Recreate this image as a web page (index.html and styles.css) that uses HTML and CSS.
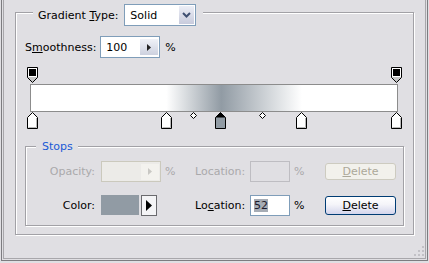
FILE: index.html
```html
<!DOCTYPE html>
<html lang="en">
<head>
    <meta charset="UTF-8">
    <title>Gradient Editor</title>
    <link rel="stylesheet" href="styles.css">
</head>
<body>
<div class="frame">
    <div class="frame-inner">
        <div class="group main">
            <div class="legend">
                <span>Gradient <u>T</u>ype:</span>
                <div class="select">
                    <span class="select-value">Solid</span>
                    <span class="select-btn">
                        <svg width="9" height="6" viewBox="0 0 9 6"><path d="M1 1L4.5 4.5L8 1" fill="none" stroke="#3f4f72" stroke-width="2"/></svg>
                    </span>
                </div>
            </div>

            <div class="row">
                <span>S<u>m</u>oothness:</span>
                <div class="spin">
                    <span class="spin-value">100</span>
                    <span class="spin-btn">
                        <svg width="4" height="7" viewBox="0 0 4 7"><path d="M0 0L4 3.5L0 7Z" fill="#222"/></svg>
                    </span>
                </div>
                <span class="pct">%</span>
            </div>

            <div class="ramp">
                <!-- color stops above the bar (opacity) -->
                <svg class="mark" style="left:2px;top:0" width="11" height="16" viewBox="0 0 11 16">
                    <path d="M0.5 0.5H10.5V10.5L5.5 15.5L0.5 10.5Z" fill="#c4c4c4" stroke="#000"/>
                    <rect x="1" y="1" width="9" height="9" fill="#fff"/>
                    <rect x="2" y="2" width="7" height="7" fill="#000"/>
                </svg>
                <svg class="mark" style="left:366px;top:0" width="11" height="16" viewBox="0 0 11 16">
                    <path d="M0.5 0.5H10.5V10.5L5.5 15.5L0.5 10.5Z" fill="#c4c4c4" stroke="#000"/>
                    <rect x="1" y="1" width="9" height="9" fill="#fff"/>
                    <rect x="2" y="2" width="7" height="7" fill="#000"/>
                </svg>

                <div class="bar"></div>

                <!-- color stops below the bar -->
                <svg class="mark" style="left:2px;top:45px" width="11" height="17" viewBox="0 0 11 17">
                    <path d="M5.5 0.5L10.5 5.5V16.5H0.5V5.5Z" fill="#fff" stroke="#000"/>
                    <path d="M1.5 15.5H9.5V6" fill="none" stroke="#b8b8b8"/>
                </svg>
                <svg class="mark" style="left:136px;top:45px" width="11" height="17" viewBox="0 0 11 17">
                    <path d="M5.5 0.5L10.5 5.5V16.5H0.5V5.5Z" fill="#fff" stroke="#000"/>
                    <path d="M1.5 15.5H9.5V6" fill="none" stroke="#b8b8b8"/>
                </svg>
                <svg class="mark" style="left:190px;top:45px" width="11" height="17" viewBox="0 0 11 17">
                    <path d="M5.5 0.5L10.5 5.5V16.5H0.5V5.5Z" fill="#919ba4" stroke="#000"/>
                    <path d="M5.5 0.5L10.5 5.5H0.5Z" fill="#000"/>
                </svg>
                <svg class="mark" style="left:271px;top:45px" width="11" height="17" viewBox="0 0 11 17">
                    <path d="M5.5 0.5L10.5 5.5V16.5H0.5V5.5Z" fill="#fff" stroke="#000"/>
                    <path d="M1.5 15.5H9.5V6" fill="none" stroke="#b8b8b8"/>
                </svg>
                <svg class="mark" style="left:366px;top:45px" width="11" height="17" viewBox="0 0 11 17">
                    <path d="M5.5 0.5L10.5 5.5V16.5H0.5V5.5Z" fill="#fff" stroke="#000"/>
                    <path d="M1.5 15.5H9.5V6" fill="none" stroke="#b8b8b8"/>
                </svg>

                <!-- midpoints -->
                <svg class="mark" style="left:165px;top:45px" width="7" height="7" viewBox="0 0 7 7">
                    <path d="M3.5 0.5L6.5 3.5L3.5 6.5L0.5 3.5Z" fill="#fff" stroke="#000"/>
                </svg>
                <svg class="mark" style="left:234px;top:45px" width="7" height="7" viewBox="0 0 7 7">
                    <path d="M3.5 0.5L6.5 3.5L3.5 6.5L0.5 3.5Z" fill="#fff" stroke="#000"/>
                </svg>
            </div>

            <div class="group stops">
                <div class="caption">Stops</div>

                <div class="stop-row first">
                    <span class="lab off">Opacity:</span>
                    <div class="field">
                        <div class="spin off">
                            <span class="spin-value"></span>
                            <span class="spin-btn">
                                <svg width="4" height="7" viewBox="0 0 4 7"><path d="M0 0L4 3.5L0 7Z" fill="#c9c8c4"/></svg>
                            </span>
                        </div>
                    </div>
                    <span class="pct-cell off">%</span>
                    <span class="lab2 off">Location:</span>
                    <div class="num off"></div>
                    <span class="pct2 off">%</span>
                    <button class="btn" disabled><u>D</u>elete</button>
                </div>

                <div class="stop-row second">
                    <span class="lab">Color:</span>
                    <div class="field">
                        <div class="swatch"></div>
                        <div class="arrow-btn">
                            <svg width="6" height="11" viewBox="0 0 6 11"><path d="M0 0L6 5.5L0 11Z" fill="#000"/></svg>
                        </div>
                    </div>
                    <span class="pct-cell"></span>
                    <span class="lab2">Lo<u>c</u>ation:</span>
                    <div class="num"><span class="sel">52</span></div>
                    <span class="pct2">%</span>
                    <button class="btn primary"><u>D</u>elete</button>
                </div>
            </div>
        </div>

        <svg class="grip" width="11" height="11" viewBox="0 0 11 11">
            <rect x="8" y="0" width="2" height="2" fill="#c2c1c6"/>
            <rect x="4" y="4" width="2" height="2" fill="#c2c1c6"/>
            <rect x="8" y="4" width="2" height="2" fill="#c2c1c6"/>
            <rect x="0" y="8" width="2" height="2" fill="#c2c1c6"/>
            <rect x="4" y="8" width="2" height="2" fill="#c2c1c6"/>
            <rect x="8" y="8" width="2" height="2" fill="#c2c1c6"/>
        </svg>
    </div>
</div>
</body>
</html>
```

FILE: styles.css
```css
body {
    margin: 0;
    width: 429px;
    height: 263px;
    overflow: hidden;
    background-color: #e0dfe3;
    font-family: "DejaVu Sans", sans-serif;
    font-size: 11px;
    color: #000;
}
.frame {
    box-sizing: border-box;
    width: 427px;
    height: 261px;
    margin-left: 1px;
    border: 1px solid #7d7c80;
    border-top: 0;
    padding: 0 1px 1px;
}
.frame-inner {
    box-sizing: border-box;
    height: 100%;
    border: 1px solid #a8a7ab;
    border-top: 0;
    display: flex;
    flex-direction: column;
}
.group {
    box-sizing: border-box;
    border: 1px solid #a2a1a6;
    box-shadow: inset 1px 1px 0 #fff, 1px 1px 0 #fff;
    display: flex;
    flex-direction: column;
    align-items: flex-start;
}
.main {
    width: 399px;
    height: 223px;
    margin: 12px 0 0 11px;
    padding-left: 9px;
}
.legend {
    display: flex;
    align-items: center;
    gap: 6px;
    margin: -9px 0 0 8px;
    padding: 0 7px 0 5px;
    background-color: #e0dfe3;
}
.select {
    box-sizing: border-box;
    display: flex;
    align-items: center;
    width: 72px;
    height: 22px;
    padding: 0 1px 0 5px;
    border: 1px solid #7f9db9;
    background-color: #fff;
}
.select-value {
    flex: 1;
}
.select-btn {
    display: flex;
    align-items: center;
    justify-content: center;
    width: 15px;
    height: 18px;
    background: linear-gradient(#eceef6, #c8cbdc);
}
.row {
    display: flex;
    align-items: center;
    margin-top: 10px;
}
.row .spin {
    margin-left: 4px;
}
.spin {
    box-sizing: border-box;
    display: flex;
    align-items: center;
    width: 60px;
    height: 22px;
    padding: 0 1px 0 5px;
    border: 1px solid #7f9db9;
    background-color: #fff;
}
.spin-value {
    flex: 1;
}
.spin-btn {
    display: flex;
    align-items: center;
    justify-content: center;
    width: 18px;
    height: 16px;
    background: linear-gradient(#f0f2f8, #cdd1df);
}
.spin.off {
    height: 21px;
    border-color: #cbc9bd;
    background-color: #ecebe8;
}
.spin.off .spin-btn {
    background: #f3f2ee;
}
.pct {
    margin-left: 5px;
}
.ramp {
    position: relative;
    width: 378px;
    height: 62px;
    margin-top: 9px;
}
.bar {
    box-sizing: border-box;
    width: 368px;
    height: 28px;
    margin: 17px 0 0 5px;
    border: 1px solid #8c8c8c;
    background: linear-gradient(to right, #fff 0%, #fff 37%, #919ba4 52%, #fff 74%, #fff 100%);
}
.mark {
    position: absolute;
    display: block;
}
.stops {
    width: 379px;
    height: 80px;
    margin-top: 17px;
}
.caption {
    margin: -7px 0 0 10px;
    padding: 0 5px 0 6px;
    line-height: 13px;
    color: #1a5ad6;
    background-color: #e0dfe3;
}
.stop-row {
    display: flex;
    align-items: center;
    height: 21px;
}
.stop-row.first {
    margin-top: 8px;
}
.stop-row.second {
    margin-top: 13px;
}
.lab {
    box-sizing: border-box;
    width: 75px;
    padding-right: 6px;
    text-align: right;
}
.field {
    display: flex;
    gap: 2px;
    width: 60px;
}
.pct-cell {
    box-sizing: border-box;
    width: 34px;
    padding-left: 4px;
}
.lab2 {
    width: 55px;
}
.num {
    box-sizing: border-box;
    display: flex;
    align-items: center;
    width: 40px;
    height: 21px;
    padding-left: 3px;
    border: 1px solid #7f9db9;
    background-color: #fff;
}
.num.off {
    border-color: #bebdc2;
    background-color: transparent;
}
.sel {
    background-color: #a6acb5;
    color: #1b1b2b;
}
.pct2 {
    box-sizing: border-box;
    width: 35px;
    padding-left: 4px;
}
.off {
    color: #aaa9ab;
}
.swatch {
    width: 38px;
    height: 20px;
    background-color: #919ba4;
}
.arrow-btn {
    box-sizing: border-box;
    display: flex;
    align-items: center;
    justify-content: center;
    width: 16px;
    height: 21px;
    border: 1px solid #6a6a6e;
    background-color: #f4f4f6;
}
.btn {
    box-sizing: border-box;
    width: 71px;
    height: 17px;
    padding: 0;
    border: 1px solid #cdcbc0;
    border-radius: 3px;
    background-color: #f2f1ec;
    font-family: "DejaVu Sans", sans-serif;
    font-size: 11px;
    color: #aca899;
}
.btn.primary {
    height: 19px;
    border-color: #003c74;
    background: linear-gradient(#ffffff 0%, #f4f4f9 45%, #d3d5ec 100%);
    color: #000;
}
.grip {
    display: block;
    align-self: flex-end;
    margin: auto 0 1px 0;
}
```
